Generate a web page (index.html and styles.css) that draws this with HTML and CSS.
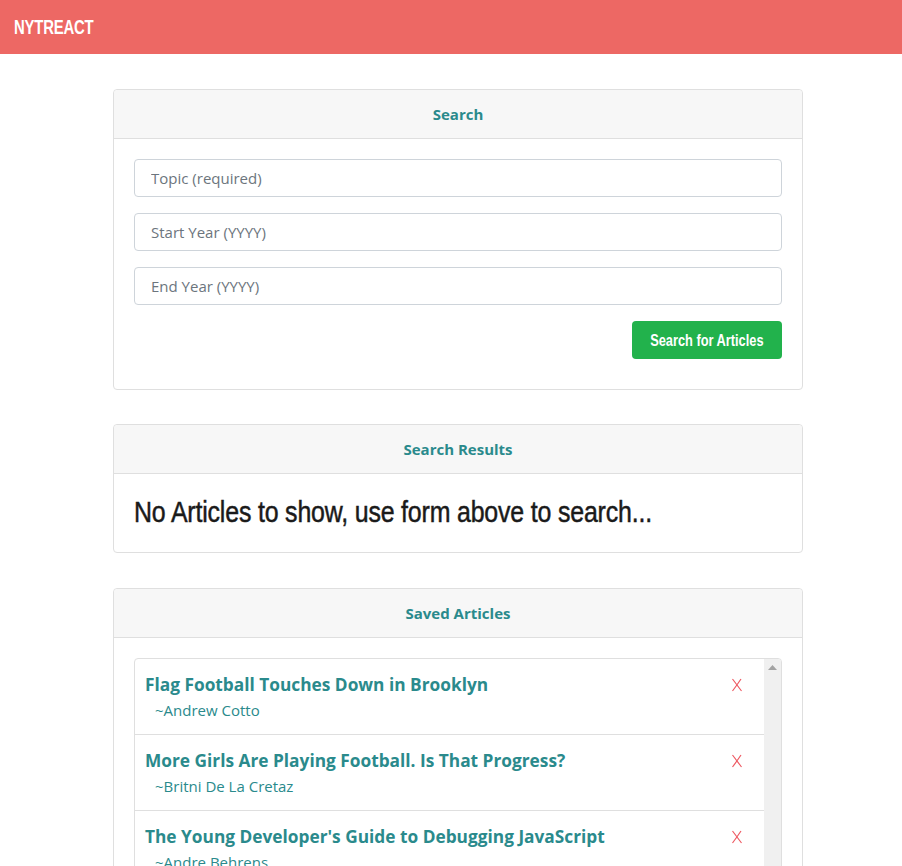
FILE: index.html
```html
<!DOCTYPE html>
<html>
<head>
<meta charset="utf-8">
<title>NYTReact</title>
<link rel="stylesheet" href="styles.css">
</head>
<body>
<nav class="navbar"><span class="brand">NYTREACT</span></nav>
<main class="main">
  <section class="card">
    <div class="card-header">Search</div>
    <div class="card-body form">
      <input class="field" type="text" placeholder="Topic (required)">
      <input class="field" type="text" placeholder="Start Year (YYYY)">
      <input class="field" type="text" placeholder="End Year (YYYY)">
      <div class="actions"><button class="btn"><span class="btn-label">Search for Articles</span></button></div>
    </div>
  </section>
  <section class="card">
    <div class="card-header">Search Results</div>
    <div class="card-body results">
      <h2 class="empty"><span class="empty-label">No Articles to show, use form above to search...</span></h2>
    </div>
  </section>
  <section class="card">
    <div class="card-header">Saved Articles</div>
    <div class="card-body">
      <div class="list">
        <div class="list-items">
          <div class="item">
            <div class="item-text">
              <div class="item-title">Flag Football Touches Down in Brooklyn</div>
              <div class="item-author">~Andrew Cotto</div>
            </div>
            <svg class="del" width="12" height="14" viewBox="0 0 12 14"><path d="M1.5 1 Q6 7 10.5 13 M10 1 Q6 7 1.5 13" stroke="#ee5a63" stroke-width="1.2" fill="none"/></svg>
          </div>
          <div class="item">
            <div class="item-text">
              <div class="item-title">More Girls Are Playing Football. Is That Progress?</div>
              <div class="item-author">~Britni De La Cretaz</div>
            </div>
            <svg class="del" width="12" height="14" viewBox="0 0 12 14"><path d="M1.5 1 Q6 7 10.5 13 M10 1 Q6 7 1.5 13" stroke="#ee5a63" stroke-width="1.2" fill="none"/></svg>
          </div>
          <div class="item">
            <div class="item-text">
              <div class="item-title">The Young Developer's Guide to Debugging JavaScript</div>
              <div class="item-author">~Andre Behrens</div>
            </div>
            <svg class="del" width="12" height="14" viewBox="0 0 12 14"><path d="M1.5 1 Q6 7 10.5 13 M10 1 Q6 7 1.5 13" stroke="#ee5a63" stroke-width="1.2" fill="none"/></svg>
          </div>
        </div>
        <div class="scrollbar">
          <svg class="scroll-up" width="9" height="5" viewBox="0 0 9 5"><path d="M0 5 L4.5 0 L9 5 Z" fill="#a3a3a3"/></svg>
        </div>
      </div>
    </div>
  </section>
</main>
</body>
</html>
```

FILE: styles.css
```css
html, body { margin: 0; padding: 0; }
body {
  font-family: "Open Sans", "Noto Sans", sans-serif;
  background: #fff;
  color: #212529;
  overflow: hidden;
}
.navbar {
  height: 54px;
  background: #ed6864;
  display: flex;
  align-items: center;
  padding: 0 14px;
  box-sizing: border-box;
}
.brand {
  display: inline-block;
  color: #fff;
  font-family: "Liberation Sans", Arial, sans-serif;
  font-weight: 700;
  font-size: 20px;
  letter-spacing: -0.3px;
  transform: scaleX(0.745);
  transform-origin: left center;
  margin-top: 1px;
}
.main {
  width: 690px;
  margin: 35px 0 0 113px;
  display: flex;
  flex-direction: column;
}
.card {
  border: 1px solid #dfdfdf;
  border-radius: 4px;
  background: #fff;
  margin-bottom: 34px;
}
.card:nth-child(2) { margin-bottom: 35px; }
.card-header {
  height: 48px;
  background: #f7f7f7;
  border-bottom: 1px solid #dfdfdf;
  border-radius: 4px 4px 0 0;
  display: flex;
  align-items: center;
  justify-content: center;
  color: #2a8a8c;
  font-weight: 700;
  font-size: 15px;
}
.card-body { padding: 20px; }
.form { display: flex; flex-direction: column; gap: 16px; padding-bottom: 30px; }
.field {
  height: 38px;
  box-sizing: border-box;
  border: 1px solid #ced4da;
  border-radius: 4px;
  padding: 0 16px;
  font-family: "Open Sans", "Noto Sans", sans-serif;
  font-size: 15px;
  color: #495057;
}
.field::placeholder { color: #6c757d; }
.actions { display: flex; justify-content: flex-end; }
.btn {
  width: 150px;
  height: 38px;
  border: none;
  border-radius: 4px;
  background: #22b24c;
  color: #fff;
  padding: 0;
  display: flex;
  align-items: center;
  justify-content: center;
  overflow: hidden;
}
.btn-label {
  display: inline-block;
  white-space: nowrap;
  font-family: "Liberation Sans", Arial, sans-serif;
  font-weight: 700;
  font-size: 16px;
  transform: scaleX(0.8);
  transform-origin: center;
  margin-top: 2px;
}
.results { padding: 20px; height: 78px; box-sizing: border-box; }
.empty {
  margin: 0;
  font-family: "Liberation Sans", Arial, sans-serif;
  font-weight: 400;
  font-size: 30px;
  line-height: 36px;
  color: #1a1a1a;
  white-space: nowrap;
}
.empty-label {
  display: inline-block;
  transform: scaleX(0.83);
  transform-origin: left center;
  letter-spacing: -0.2px;
  -webkit-text-stroke: 0.5px #1a1a1a;
}
.list {
  border: 1px solid #dfdfdf;
  border-radius: 4px;
  height: 300px;
  display: flex;
  overflow: hidden;
}
.list-items { flex: 1; }
.scrollbar {
  width: 17px;
  background: #f0f0f0;
  display: flex;
  justify-content: center;
}
.scroll-up { margin-top: 6px; }
.item {
  display: flex;
  justify-content: space-between;
  align-items: flex-start;
  height: 76px;
  box-sizing: border-box;
  padding: 14px 21px 0 10px;
  border-bottom: 1px solid #dfdfdf;
}
.item-title {
  color: #2a8a8c;
  font-weight: 700;
  font-size: 17.3px;
  line-height: 24px;
}
.item-author {
  color: #2a8a8c;
  font-size: 15px;
  line-height: 22px;
  padding-left: 10px;
  margin-top: 2px;
}
.del { margin-top: 5px; }
```
